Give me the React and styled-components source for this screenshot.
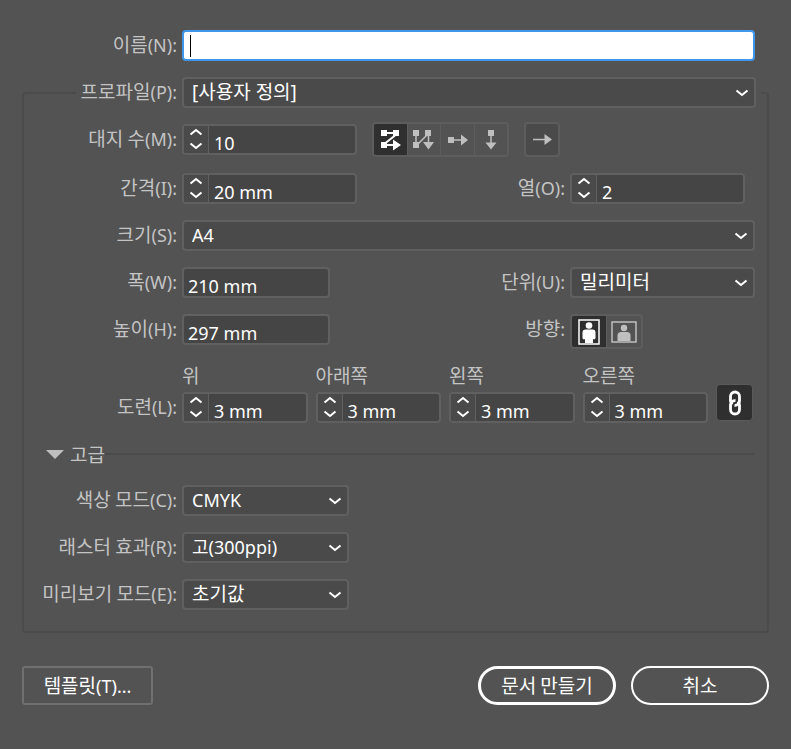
import React from "react";
import styled, { createGlobalStyle, css } from "styled-components";

const c = {
  bg: "#535353",
  select: "#4a4a4a",
  input: "#454545",
  border: "#606060",
  frame: "#4b4b4b",
  label: "#c4c4c4",
  icon: "#bfbfbf",
  dark: "#2f2f2f",
};

const GlobalStyle = createGlobalStyle`
  *, *::before, *::after { box-sizing: border-box; }
  body { margin: 0; background: ${c.bg}; }
  body, button, input, select {
    font-family: "Noto Sans", "Noto Sans CJK KR", sans-serif;
  }
`;

const Dialog = styled.form`
  padding: 30px 22px 44px;
  color: ${c.label};
  font-size: 18px;
  line-height: 24px;
`;

const Row = styled.div`
  display: flex;
  align-items: ${(p) => p.$align || "center"};
  gap: 5px;
`;

const NameRow = styled(Row)`
  padding: 0 14px 0 2px;
  margin-bottom: 16px;
`;

const Rows = styled.div`
  display: flex;
  flex-direction: column;
  gap: 16px;
`;

const LabelText = styled.label`
  flex: none;
  width: ${(p) => p.$width || "153px"};
  height: 31px;
  display: flex;
  align-items: baseline;
  justify-content: flex-end;
  line-height: 28px;
  white-space: pre;
`;

const Ko = styled.span`
  font-family: "Noto Sans CJK KR", sans-serif;
  font-size: 19px;
`;

const Panel = styled.fieldset`
  min-width: 0;
  margin: 0;
  padding: 14px 12px 21px 0;
  border: 2px solid ${c.frame};
  border-radius: 4px;
`;

const ProfileLegend = styled.legend`
  display: flex;
  gap: 5px;
  width: calc(100% - 46px);
  margin-left: 52px;
  padding: 0 5px 0 0;
`;

const boxed = css`
  height: 31px;
  border: 2px solid ${c.border};
  border-radius: 4px;
`;

const NameBox = styled.div`
  flex: 1;
  display: grid;
  align-items: center;
`;

const NameInput = styled.input`
  ${boxed}
  grid-area: 1 / 1;
  width: 100%;
  padding: 0 7px;
  border-color: #4096ea;
  background: #fff;
  color: #000;
  caret-color: transparent;
  font-size: 18px;
  outline: none;
`;

const Caret = styled.span`
  grid-area: 1 / 1;
  width: 1px;
  height: 22px;
  margin-left: 8px;
  background: #000;
  pointer-events: none;
`;

const SelectBox = styled.div`
  display: grid;
  align-items: center;
  min-width: 0;
  flex: ${(p) => (p.$width ? "none" : 1)};
  width: ${(p) => p.$width || "auto"};
`;

const SelectInput = styled.select`
  ${boxed}
  grid-area: 1 / 1;
  width: 100%;
  padding: 0 28px 1px 8px;
  appearance: none;
  background: ${c.select};
  color: #fff;
  font-size: ${(p) => p.$size};
  line-height: 24px;
`;

const SelectArrow = styled.span`
  display: flex;
  grid-area: 1 / 1;
  justify-self: end;
  margin-right: 7px;
  pointer-events: none;
`;

const TextInput = styled.input`
  ${boxed}
  width: 148px;
  padding: 6px 4px 0;
  background: ${c.input};
  color: #fff;
  font-size: 18px;
  line-height: 22px;
`;

const StepperBox = styled.div`
  ${boxed}
  display: flex;
  min-width: 0;
  flex: ${(p) => (p.$width ? "none" : 1)};
  width: ${(p) => p.$width || "auto"};
  overflow: hidden;
  background: ${c.input};
`;

const StepButtons = styled.div`
  flex: none;
  display: flex;
  flex-direction: column;
  width: 25px;
  border-right: 1px solid ${c.border};
  background: ${c.select};
`;

const StepButton = styled.button`
  flex: 1;
  display: flex;
  align-items: ${(p) => (p.$up ? "flex-start" : "flex-end")};
  justify-content: center;
  min-height: 0;
  padding: 2px 0 3px;
  border: 0;
  background: none;
`;

const StepInput = styled.input`
  flex: 1;
  min-width: 0;
  padding: 6px 4px 0 5px;
  border: 0;
  background: transparent;
  color: #fff;
  font-size: 18px;
  line-height: 22px;
`;

const RightGroup = styled.div`
  display: flex;
  align-items: flex-start;
  gap: 5px;
  margin-left: auto;
`;

const Slot = styled.div`
  display: flex;
  width: 185px;
`;

const ToolGroup = styled.div`
  display: flex;
  height: 35px;
  border: 2px solid #5d5d5d;
  border-radius: 4px;
  overflow: hidden;
  margin-left: ${(p) => p.$gap || 0};
`;

const ToolButton = styled.button`
  display: grid;
  place-items: center;
  width: ${(p) => p.$width || "33px"};
  padding: 0;
  border: 0;
  background: ${(p) => (p.$on ? c.dark : p.$raised ? c.select : "transparent")};
  color: ${(p) => (p.$on ? "#fff" : c.icon)};

  & + & {
    border-left: 1px solid #5d5d5d;
  }
`;

const BleedRow = styled.div`
  display: flex;
  align-items: flex-end;
  gap: 5px;
  margin-top: 14px;
`;

const BleedFields = styled.div`
  flex: 1;
  display: flex;
  align-items: flex-end;
  gap: 8px;
  min-width: 0;
  padding-right: 2px;
`;

const BleedField = styled.div`
  flex: 1;
  min-width: 0;
  display: flex;
  flex-direction: column;
  gap: 5px;
`;

const BleedLabel = styled.label`
  font-family: "Noto Sans CJK KR", sans-serif;
  font-size: 19px;
  line-height: 24px;
`;

const LinkButton = styled.button`
  flex: none;
  display: grid;
  place-items: center;
  width: 37px;
  height: 37px;
  margin-bottom: 2px;
  padding: 0;
  border: 1px solid #5a5a5a;
  border-radius: 4px;
  background: ${c.dark};
  color: #fff;
`;

const AdvancedHeader = styled.div`
  display: flex;
  align-items: center;
  margin: 18px 0 18px 22px;

  &::after {
    content: "";
    flex: 1;
    height: 2px;
    background: ${c.frame};
  }
`;

const AdvancedToggle = styled.button`
  display: flex;
  align-items: center;
  gap: 6px;
  padding: 0;
  border: 0;
  background: none;
  color: ${c.label};
  line-height: 26px;
`;

const Footer = styled.div`
  display: flex;
  align-items: center;
  gap: 15px;
  margin-top: 33px;
`;

const ActionButton = styled.button`
  height: 39px;
  width: ${(p) => p.$width || "138px"};
  padding: 0;
  border: ${(p) => p.$border};
  border-radius: ${(p) => p.$radius || "20px"};
  margin-right: ${(p) => p.$push || 0};
  background: transparent;
  color: #fff;
  font-size: 18px;
  line-height: 24px;
`;

const Chevron = ({ up }) => (
  <svg width="14" height="8" viewBox="0 0 14 8" fill="none" aria-hidden="true">
    <path d={up ? "M1.500 6.500 7 2l5.500 4.500" : "M1.500 1.500 7 6l5.500-4.500"} stroke="#fff" strokeWidth="2" />
  </svg>
);

const GridByRowIcon = () => (
  <svg width="22" height="22" viewBox="0 0 22 22" fill="currentColor" aria-hidden="true">
    <path d="M1 1h6v6H1zM13 1h6v6h-6zM1 13h6v6H1zM13 10.500l8 5.500-8 5.500z" />
    <path d="M7 4h6M15 6.500 5.500 14M7 16h6" stroke="currentColor" strokeWidth="2" />
  </svg>
);

const GridByColumnIcon = () => (
  <svg width="22" height="22" viewBox="0 0 22 22" fill="currentColor" aria-hidden="true">
    <path d="M0 1h6v6H0zM12 1h6v6h-6zM0 13h6v6H0zM10 13h11l-5.500 7.500z" />
    <path d="M3 7v6M5 15l9.500-9.500M15.500 7v7" stroke="currentColor" strokeWidth="1.500" />
  </svg>
);

const RowIcon = () => (
  <svg width="22" height="22" viewBox="0 0 22 22" fill="currentColor" aria-hidden="true">
    <path d="M1 8h6v6H1zM14 5.500l7 5.500-7 5.500z" />
    <path d="M7 11h7" stroke="currentColor" strokeWidth="1.500" />
  </svg>
);

const ColumnIcon = () => (
  <svg width="22" height="22" viewBox="0 0 22 22" fill="currentColor" aria-hidden="true">
    <path d="M8 1h6v6H8zM5.500 13.500h11l-5.500 7z" />
    <path d="M11 7v7" stroke="currentColor" strokeWidth="1.500" />
  </svg>
);

const ArrowIcon = () => (
  <svg width="22" height="22" viewBox="0 0 22 22" fill="currentColor" aria-hidden="true">
    <path d="M13.500 5l7.500 5.500-7.500 5.500z" />
    <path d="M2 10.500h12" stroke="currentColor" strokeWidth="1.500" />
  </svg>
);

const PortraitIcon = () => (
  <svg width="22" height="26" viewBox="0 0 22 26" fill="currentColor" aria-hidden="true">
    <rect x="1" y="1" width="20" height="24" fill="none" stroke="currentColor" strokeWidth="1.500" />
    <circle cx="11" cy="6.500" r="3.300" />
    <path d="M7.500 10.500h7a3 3 0 0 1 3 3v5.500a1.500 1.500 0 0 1-2.500 1V24H7v-4a1.500 1.500 0 0 1-2.500-1v-5.500a3 3 0 0 1 3-3z" />
  </svg>
);

const LandscapeIcon = () => (
  <svg width="26" height="22" viewBox="0 0 26 22" fill="currentColor" aria-hidden="true">
    <rect x="1" y="1" width="24" height="20" fill="none" stroke="currentColor" strokeWidth="1.500" />
    <circle cx="13" cy="7" r="3.200" />
    <path d="M6.500 20v-5.500A3.500 3.500 0 0 1 10 11h6a3.500 3.500 0 0 1 3.500 3.500V20z" />
  </svg>
);

const LinkIcon = () => (
  <svg width="14" height="26" viewBox="0 0 14 26" fill="none" stroke="currentColor" strokeWidth="2.800" aria-hidden="true">
    <path d="M4.500 14.200A4 4 0 0 1 2.500 11V6.500a4.500 4.500 0 0 1 9 0V11a4.500 4.500 0 0 1-5 4.400" />
    <path d="M9.500 11.800a4 4 0 0 1 2 3.200v4.500a4.500 4.500 0 0 1-9 0V15a4.500 4.500 0 0 1 5-4.400" />
  </svg>
);

function Label({ htmlFor, ko, suffix, width }) {
  return (
    <LabelText htmlFor={htmlFor} $width={width}>
      <Ko>{ko}</Ko>
      {suffix}
    </LabelText>
  );
}

function Select({ id, value, width, size = "19px" }) {
  return (
    <SelectBox $width={width}>
      <SelectInput id={id} $size={size} defaultValue={value}>
        <option>{value}</option>
      </SelectInput>
      <SelectArrow>
        <Chevron />
      </SelectArrow>
    </SelectBox>
  );
}

function Stepper({ id, value, width }) {
  return (
    <StepperBox $width={width}>
      <StepButtons>
        <StepButton type="button" $up aria-label="+">
          <Chevron up />
        </StepButton>
        <StepButton type="button" aria-label="-">
          <Chevron />
        </StepButton>
      </StepButtons>
      <StepInput id={id} defaultValue={value} />
    </StepperBox>
  );
}

const bleeds = [
  ["top", "위"],
  ["bottom", "아래쪽"],
  ["left", "왼쪽"],
  ["right", "오른쪽"],
];

const advanced = [
  ["color", "색상 모드", "(C):", "CMYK", "18px"],
  ["raster", "래스터 효과", "(R):", "고(300ppi)", "18px"],
  ["preview", "미리보기 모드", "(E):", "초기값", "19px"],
];

export default function App() {
  return (
    <>
      <GlobalStyle />
      <Dialog onSubmit={(e) => e.preventDefault()}>
        <NameRow>
          <Label htmlFor="name" ko="이름" suffix="(N):" />
          <NameBox>
            <NameInput id="name" />
            <Caret />
          </NameBox>
        </NameRow>

        <Panel>
          <ProfileLegend>
            <Label htmlFor="profile" ko="프로파일" suffix="(P):" width="101px" />
            <Select id="profile" value="[사용자 정의]" />
          </ProfileLegend>

          <Rows>
            <Row>
              <Label htmlFor="count" ko="대지 수" suffix="(M):" />
              <Stepper id="count" value="10" width="175px" />
              <ToolGroup $gap="10px">
                <ToolButton type="button" $on aria-label="Grid by Row"><GridByRowIcon /></ToolButton>
                <ToolButton type="button" aria-label="Grid by Column"><GridByColumnIcon /></ToolButton>
                <ToolButton type="button" $width="34px" aria-label="Arrange by Row"><RowIcon /></ToolButton>
                <ToolButton type="button" aria-label="Arrange by Column"><ColumnIcon /></ToolButton>
              </ToolGroup>
              <ToolGroup $gap="10px">
                <ToolButton type="button" $raised $width="32px" aria-label="Right-to-Left"><ArrowIcon /></ToolButton>
              </ToolGroup>
            </Row>

            <Row>
              <Label htmlFor="spacing" ko="간격" suffix="(I):" />
              <Stepper id="spacing" value="20 mm" width="175px" />
              <RightGroup>
                <Label htmlFor="columns" ko="열" suffix="(O):" width="auto" />
                <Slot>
                  <Stepper id="columns" value="2" width="175px" />
                </Slot>
              </RightGroup>
            </Row>

            <Row>
              <Label htmlFor="size" ko="크기" suffix="(S):" />
              <Select id="size" value="A4" size="18px" />
            </Row>

            <Row>
              <Label htmlFor="width" ko="폭" suffix="(W):" />
              <TextInput id="width" defaultValue="210 mm" />
              <RightGroup>
                <Label htmlFor="unit" ko="단위" suffix="(U):" width="auto" />
                <Slot>
                  <Select id="unit" value="밀리미터" />
                </Slot>
              </RightGroup>
            </Row>

            <Row $align="flex-start">
              <Label htmlFor="height" ko="높이" suffix="(H):" />
              <TextInput id="height" defaultValue="297 mm" />
              <RightGroup>
                <Label htmlFor="portrait" ko="방향" suffix=":" width="auto" />
                <Slot>
                  <ToolGroup>
                    <ToolButton id="portrait" type="button" $on $width="34px" aria-label="Portrait"><PortraitIcon /></ToolButton>
                    <ToolButton type="button" $width="35px" aria-label="Landscape"><LandscapeIcon /></ToolButton>
                  </ToolGroup>
                </Slot>
              </RightGroup>
            </Row>
          </Rows>

          <BleedRow>
            <Label htmlFor="bleed-top" ko="도련" suffix="(L):" />
            <BleedFields>
              {bleeds.map(([key, text]) => (
                <BleedField key={key}>
                  <BleedLabel htmlFor={`bleed-${key}`}>{text}</BleedLabel>
                  <Row>
                    <Stepper id={`bleed-${key}`} value="3 mm" />
                  </Row>
                </BleedField>
              ))}
              <LinkButton type="button" aria-label="Link"><LinkIcon /></LinkButton>
            </BleedFields>
          </BleedRow>

          <AdvancedHeader>
            <AdvancedToggle type="button" aria-expanded="true">
              <svg width="18" height="10" viewBox="0 0 18 10" aria-hidden="true">
                <path d="M0 1h18L9 10z" fill={c.icon} />
              </svg>
              <Ko>고급</Ko>
            </AdvancedToggle>
          </AdvancedHeader>

          <Rows>
            {advanced.map(([id, ko, suffix, value, size]) => (
              <Row key={id}>
                <Label htmlFor={id} ko={ko} suffix={suffix} />
                <Select id={id} value={value} width="167px" size={size} />
              </Row>
            ))}
          </Rows>
        </Panel>

        <Footer>
          <ActionButton type="button" $width="131px" $radius="3px" $border="2px solid #707070" $push="auto">
            <Ko>템플릿</Ko>(T)...
          </ActionButton>
          <ActionButton type="submit" $border="3px solid #fff"><Ko>문서 만들기</Ko></ActionButton>
          <ActionButton type="button" $border="2px solid #fff"><Ko>취소</Ko></ActionButton>
        </Footer>
      </Dialog>
    </>
  );
}
